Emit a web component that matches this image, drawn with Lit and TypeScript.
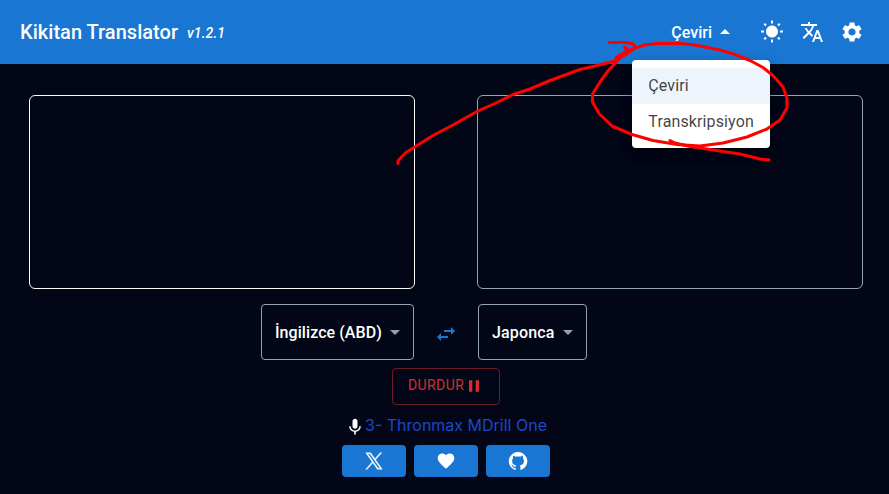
import { LitElement, html, css, svg } from "lit";
import { customElement } from "lit/decorators.js";

const icons = {
  sun: "M6.76 4.84l-1.8-1.79-1.41 1.41 1.79 1.79 1.42-1.41zM4 10.5H1v2h3v-2zm9-9.95h-2V3.5h2V.55zm7.45 3.91l-1.41-1.41-1.79 1.79 1.41 1.41 1.79-1.79zm-3.21 13.7l1.79 1.8 1.41-1.41-1.8-1.79-1.4 1.4zM20 10.5v2h3v-2h-3zm-8-5c-3.31 0-6 2.69-6 6s2.69 6 6 6 6-2.69 6-6-2.69-6-6-6zm-1 16.95h2V19.5h-2v2.95zm-7.45-3.91l1.41 1.41 1.79-1.8-1.41-1.41-1.79 1.8z",
  translate: "m12.87 15.07-2.54-2.51.03-.03c1.74-1.94 2.98-4.17 3.71-6.53H17V4h-7V2H8v2H1v1.99h11.17C11.5 7.92 10.44 9.75 9 11.35 8.07 10.32 7.3 9.19 6.69 8h-2c.73 1.63 1.73 3.17 2.98 4.56l-5.09 5.02L4 19l5-5 3.11 3.11.76-2.04zM18.5 10h-2L12 22h2l1.12-3h4.75L21 22h2l-4.5-12zm-2.62 7 1.62-4.33L19.12 17h-3.24z",
  settings: "M19.14 12.94c.04-.3.06-.61.06-.94 0-.32-.02-.64-.07-.94l2.03-1.58c.18-.14.23-.41.12-.61l-1.92-3.32c-.12-.22-.37-.29-.59-.22l-2.39.96c-.5-.38-1.03-.7-1.62-.94l-.36-2.54c-.04-.24-.24-.41-.48-.41h-3.84c-.24 0-.43.17-.47.41l-.36 2.54c-.59.24-1.13.57-1.62.94l-2.39-.96c-.22-.08-.47 0-.59.22L2.74 8.87c-.12.21-.08.47.12.61l2.03 1.58c-.05.3-.09.63-.09.94s.02.64.07.94l-2.03 1.58c-.18.14-.23.41-.12.61l1.92 3.32c.12.22.37.29.59.22l2.39-.96c.5.38 1.03.7 1.62.94l.36 2.54c.05.24.24.41.48.41h3.84c.24 0 .44-.17.47-.41l.36-2.54c.59-.24 1.13-.56 1.62-.94l2.39.96c.22.08.47 0 .59-.22l1.92-3.32c.12-.22.07-.47-.12-.61l-2.01-1.58zM12 15.6c-1.98 0-3.6-1.62-3.6-3.6s1.62-3.6 3.6-3.6 3.6 1.62 3.6 3.6-1.62 3.6-3.6 3.6z",
  down: "M7 10l5 5 5-5z",
  up: "M7 14l5-5 5 5z",
  swap: "M6.99 11L3 15l3.99 4v-3H14v-2H6.99v-3zM21 9l-3.99-4v3H10v2h7.01v3L21 9z",
  pause: "M6 19h4V5H6v14zm8-14v14h4V5h-4z",
  mic: "M12 14c1.66 0 2.99-1.34 2.99-3L15 5c0-1.66-1.34-3-3-3S9 3.34 9 5v6c0 1.66 1.34 3 3 3zm5.3-3c0 3-2.54 5.1-5.3 5.1S6.7 14 6.7 11H5c0 3.41 2.72 6.23 6 6.72V21h2v-3.28c3.28-.48 6-3.3 6-6.72h-1.7z",
  x: "M14.095479,10.316482L22.286354,1h-1.940718l-7.115352,8.087682L7.551414,1H1l8.589488,12.231093L1,23h1.940717l7.509372-8.542861L16.448587,23H23L14.095479,10.316482z M11.436522,13.338465l-0.871624-1.218704l-6.924311-9.68815h2.981339l5.58978,7.82155l0.867949,1.218704l7.26506,10.166271h-2.981339L11.436522,13.338465z",
  heart: "M12 21.35l-1.45-1.32C5.4 15.36 2 12.28 2 8.5 2 5.42 4.42 3 7.5 3c1.74 0 3.41.81 4.5 2.09C13.09 3.81 14.76 3 16.5 3 19.58 3 22 5.42 22 8.5c0 3.78-3.4 6.86-8.55 11.54L12 21.35z",
  github: "M12 1.27a11 11 0 00-3.48 21.46c.55.09.73-.28.73-.55v-1.84c-3.03.64-3.67-1.46-3.67-1.46-.55-1.29-1.28-1.65-1.28-1.65-.92-.65.1-.65.1-.65 1.1 0 1.73 1.1 1.73 1.1.92 1.65 2.57 1.2 3.21.92a2 2 0 01.64-1.47c-2.47-.27-5.04-1.19-5.04-5.5 0-1.1.46-2.1 1.2-2.84a3.76 3.76 0 010-2.93s.91-.28 3.11 1.1c1.8-.49 3.7-.49 5.5 0 2.1-1.38 3.02-1.1 3.02-1.1a3.76 3.76 0 01.1 2.93c.83.74 1.2 1.74 1.2 2.94 0 4.21-2.57 5.13-5.04 5.4.45.37.82.92.82 2.02v3.03c0 .27.1.64.73.55A11 11 0 0012 1.27",
};

const icon = (name: keyof typeof icons, size: number, cls = "") => html`
  <svg class=${cls} width=${size} height=${size} viewBox="0 0 24 24" fill="currentColor">
    ${svg`<path d=${icons[name]}></path>`}
  </svg>`;

@customElement("app-root")
export class AppRoot extends LitElement {
  static styles = css`
    :host {
      display: block;
      position: relative;
      height: 494px;
      overflow: hidden;
      background: #020617;
      color: #fff;
      font-family: Roboto, "Liberation Sans", sans-serif;
    }
    * { box-sizing: border-box; }
    svg { display: block; flex: none; }
    header {
      display: flex;
      align-items: center;
      height: 64px;
      padding: 0 25px 0 20px;
      background: #1976d2;
    }
    .title { font-size: 20px; font-weight: 500; line-height: 32px; letter-spacing: 0.03px; }
    .version { margin-left: 9px; font-size: 14px; font-weight: 500; font-style: italic; letter-spacing: 0.1px; padding-top: 2px; }
    .actions { display: flex; align-items: center; margin-left: auto; }
    .mode-wrap { position: relative; margin-right: 23px; }
    .mode { display: flex; align-items: center; font-size: 16px; font-weight: 500; gap: 1px; }
    .tools { display: flex; gap: 16px; }
    .menu {
      position: absolute;
      z-index: 2;
      top: 40px;
      left: -39px;
      width: 138px;
      height: 88px;
      padding: 8px 0;
      border-radius: 4px;
      background: #fff;
      color: rgba(0, 0, 0, 0.75);
      box-shadow: 0 5px 5px -3px rgba(0,0,0,.2), 0 8px 10px 1px rgba(0,0,0,.14), 0 3px 14px 2px rgba(0,0,0,.12);
    }
    .item { height: 36px; padding: 0 16px; font-size: 16px; line-height: 36px; letter-spacing: 0.12px; }
    .item.selected { background: #edf4fb; }
    .panels { display: flex; justify-content: space-between; padding: 31px 26px 0 29px; }
    .panel { width: 386px; height: 194px; border: 1px solid #94a3b8; border-radius: 6px; }
    .panel.source { border-color: #f8fafc; }
    .langs { display: flex; align-items: center; margin: 15px 0 0 261px; }
    .lang {
      display: flex;
      align-items: center;
      justify-content: space-between;
      height: 56px;
      padding: 0 6px 0 13px;
      border: 1px solid #94a3b8;
      border-radius: 4px;
      font-size: 16px;
      font-weight: 500;
      letter-spacing: 0.15px;
      white-space: nowrap;
    }
    .lang svg { color: #94a3b8; }
    .from { width: 153px; }
    .from span { letter-spacing: 0.07px; }
    .to { width: 109px; }
    .swap { width: 64px; display: flex; justify-content: center; padding-top: 4px; color: #1976d2; }
    .stop {
      display: flex;
      align-items: center;
      width: 108px;
      height: 37px;
      margin: 8px 0 0 392px;
      padding: 0 15px 3px;
      border: 1px solid rgba(211, 47, 47, 0.5);
      border-radius: 4px;
      color: #d32f2f;
      font-size: 14px;
      letter-spacing: 0.4px;
    }
    .stop svg { margin-top: 2px; }
    .device {
      display: flex;
      align-items: center;
      height: 24px;
      margin: 8px 0 0 345px;
      font: 16px/24px Inter, sans-serif;
    }
    .device svg { margin-top: 3px; }
    .device span { color: #1d48c8; white-space: nowrap; }
    .links { display: flex; gap: 8px; margin: 8px 0 0 342px; }
    .link {
      display: flex;
      align-items: center;
      justify-content: center;
      width: 64px;
      height: 32px;
      border-radius: 4px;
      background: #1976d2;
    }
    .bold { stroke: currentColor; stroke-width: 0.6; }
    .ink { position: absolute; z-index: 3; inset: 0; pointer-events: none; }
  `;

  render() {
    return html`
      <header>
        <div class="title">Kikitan Translator</div>
        <div class="version">v1.2.1</div>
        <div class="actions">
          <div class="mode-wrap">
            <div class="mode"><span>Çeviri</span>${icon("up", 24)}</div>
            <div class="menu">
              <div class="item selected">Çeviri</div>
              <div class="item">Transkripsiyon</div>
            </div>
          </div>
          <div class="tools">
            ${icon("sun", 24)}${icon("translate", 24)}${icon("settings", 24)}
          </div>
        </div>
      </header>
      <div class="panels">
        <div class="panel source"></div>
        <div class="panel"></div>
      </div>
      <div class="langs">
        <div class="lang from"><span>İngilizce (ABD)</span>${icon("down", 24)}</div>
        <div class="swap">${icon("swap", 24)}</div>
        <div class="lang to"><span>Japonca</span>${icon("down", 24)}</div>
      </div>
      <div class="stop"><span>DURDUR</span>${icon("pause", 20)}</div>
      <div class="device">${icon("mic", 20)}<span>3- Thronmax MDrill One</span></div>
      <div class="links">
        <div class="link">${icon("x", 18, "bold")}</div>
        <div class="link">${icon("heart", 20)}</div>
        <div class="link">${icon("github", 20)}</div>
      </div>
      <svg class="ink" width="889" height="494" viewBox="0 0 889 494" fill="none" stroke="#f00" stroke-width="3" stroke-linecap="round" stroke-linejoin="round">
        <path d="M398 163.500V161L400.500 158L406 152.500L414 147.500L433 135.500L452 125.500L477 111.500L497 102.500L513 94.500L530 89L550 80.500L580 69.500L597 65.500L615 61L625 55L635 48"></path>
        <path d="M609.500 42.500H627L633 44L635.500 47L630 50L620 55L616 58"></path>
        <path d="M625 47.500L628 51L617 59L616 61" stroke-width="4"></path>
        <path d="M616 60L626 52L635 48L645 45L657 43.500H680L695 45L720 50L735 54.500L750 60.500L763 67.500L773 75.500L783 87L787 98V108L780 120L767 129L747 137L723 143L700 146L677 144.500L653 140.500L632 134.500L612 126L599 113.500L592.500 102V94L600 82L608 71L620 58L628 51"></path>
        <path d="M670 140.500L675 143L690 146.500L713 150L740 154L760 159L769 160"></path>
      </svg>
    `;
  }
}
